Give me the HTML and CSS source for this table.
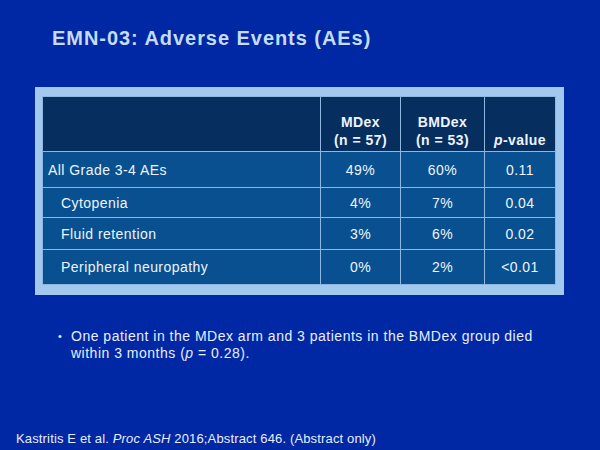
FILE: index.html
```html
<!DOCTYPE html>
<html>
<head>
<meta charset="utf-8">
<link rel="stylesheet" href="styles.css">
</head>
<body>
<div class="slide">
  <h1 class="title">EMN-03: Adverse Events (AEs)</h1>
  <div class="table-frame">
    <table class="ae-table">
      <colgroup>
        <col class="c-label">
        <col class="c-mdex">
        <col class="c-bmdex">
        <col class="c-p">
      </colgroup>
      <thead>
        <tr class="r-head">
          <th></th>
          <th>MDex<br>(n = 57)</th>
          <th>BMDex<br>(n = 53)</th>
          <th><i>p</i>-value</th>
        </tr>
      </thead>
      <tbody>
        <tr class="r1">
          <td class="label">All Grade 3-4 AEs</td>
          <td>49%</td><td>60%</td><td>0.11</td>
        </tr>
        <tr class="r2">
          <td class="label sub">Cytopenia</td>
          <td>4%</td><td>7%</td><td>0.04</td>
        </tr>
        <tr class="r3">
          <td class="label sub">Fluid retention</td>
          <td>3%</td><td>6%</td><td>0.02</td>
        </tr>
        <tr class="r4">
          <td class="label sub">Peripheral neuropathy</td>
          <td>0%</td><td>2%</td><td>&lt;0.01</td>
        </tr>
      </tbody>
    </table>
  </div>
  <ul class="bullets">
    <li>One patient in the MDex arm and 3 patients in the BMDex group died within 3 months (<i>p</i>&nbsp;=&nbsp;0.28).</li>
  </ul>
  <p class="footnote">Kastritis E et al. <i>Proc ASH</i> 2016;Abstract 646. (Abstract only)</p>
</div>
</body>
</html>
```
FILE: styles.css
```css
html, body {
  margin: 0;
  padding: 0;
}
body {
  background: #0027a4;
}
.slide {
  width: 600px;
  height: 450px;
  box-sizing: border-box;
  background: #0027a4;
  font-family: "Liberation Sans", Arial, sans-serif;
  display: flex;
  flex-direction: column;
  padding: 0 0 4px 0;
  overflow: hidden;
}
.title {
  margin: 26px 0 0 52px;
  font-size: 20px;
  line-height: 24px;
  font-weight: bold;
  letter-spacing: 0.95px;
  color: #c4dcf4;
}
.table-frame {
  margin: 37px 0 0 35px;
  width: 529px;
  box-sizing: border-box;
  padding: 9px 9px 10px 7px;
  background: #a2c8ee;
}
.ae-table {
  border-collapse: collapse;
  table-layout: fixed;
  width: 513px;
  color: #eef4ff;
  font-size: 14px;
  letter-spacing: 0.45px;
}
.c-label { width: 278px; }
.c-mdex { width: 80px; }
.c-bmdex { width: 84px; }
.c-p { width: 71px; }
.ae-table th,
.ae-table td {
  border: 1px solid #8fb6e0;
  padding: 0;
  text-align: center;
}
.ae-table th {
  background: #062e5e;
  font-weight: bold;
  vertical-align: bottom;
  line-height: 18px;
  padding-bottom: 2px;
}
.ae-table td {
  background: #08508f;
  vertical-align: middle;
}
.ae-table td.label {
  text-align: left;
  padding-left: 5px;
}
.ae-table td.sub {
  padding-left: 18px;
}
.r-head { height: 55px; }
.r1 { height: 36px; }
.r2 { height: 30px; }
.r3 { height: 32px; }
.r4 { height: 35px; }
.bullets {
  margin: 33px 0 0 0;
  padding: 0 40px 0 71px;
  list-style: none;
  color: #e6eefc;
  font-size: 14px;
  line-height: 17px;
  letter-spacing: 0.5px;
}
.bullets li {
  position: relative;
}
.bullets li::before {
  content: "\2022";
  position: absolute;
  left: -13px;
  top: 0;
  font-size: 11px;
}
.footnote {
  margin: auto 0 0 16px;
  color: #e6eefc;
  font-size: 13px;
  line-height: 15px;
  letter-spacing: 0.15px;
}
```
